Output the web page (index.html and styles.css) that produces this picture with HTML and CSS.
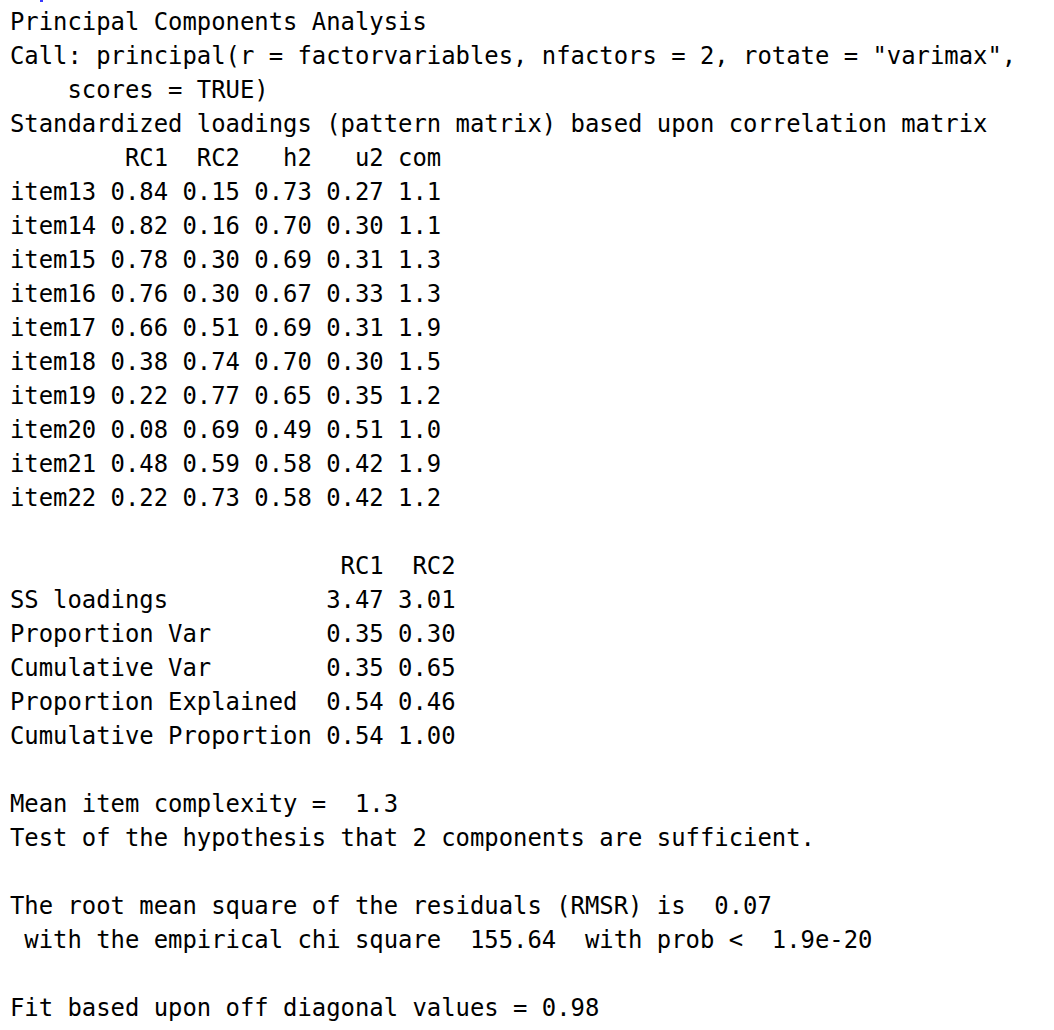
FILE: index.html
```html
<!DOCTYPE html>
<html>
<head>
<meta charset="utf-8">
<link rel="stylesheet" href="styles.css">
</head>
<body>
<div class="console">
<span class="cursor-mark"></span>
<pre class="output">Principal Components Analysis
Call: principal(r = factorvariables, nfactors = 2, rotate = "varimax", 
    scores = TRUE)
Standardized loadings (pattern matrix) based upon correlation matrix
        RC1  RC2   h2   u2 com
item13 0.84 0.15 0.73 0.27 1.1
item14 0.82 0.16 0.70 0.30 1.1
item15 0.78 0.30 0.69 0.31 1.3
item16 0.76 0.30 0.67 0.33 1.3
item17 0.66 0.51 0.69 0.31 1.9
item18 0.38 0.74 0.70 0.30 1.5
item19 0.22 0.77 0.65 0.35 1.2
item20 0.08 0.69 0.49 0.51 1.0
item21 0.48 0.59 0.58 0.42 1.9
item22 0.22 0.73 0.58 0.42 1.2

                       RC1  RC2
SS loadings           3.47 3.01
Proportion Var        0.35 0.30
Cumulative Var        0.35 0.65
Proportion Explained  0.54 0.46
Cumulative Proportion 0.54 1.00

Mean item complexity =  1.3
Test of the hypothesis that 2 components are sufficient.

The root mean square of the residuals (RMSR) is  0.07 
 with the empirical chi square  155.64  with prob <  1.9e-20 

Fit based upon off diagonal values = 0.98</pre>
</div>
</body>
</html>
```
FILE: styles.css
```css
html, body {
  margin: 0;
  padding: 0;
  background: #ffffff;
}
.console {
  position: relative;
  padding: 5px 0 0 10px;
}
.cursor-mark {
  position: absolute;
  left: 40px;
  top: 0;
  width: 3px;
  height: 2px;
  background: #3a3aff;
}
.output {
  margin: 0;
  font-family: "DejaVu Sans Mono", "Liberation Mono", monospace;
  font-size: 23.88px;
  line-height: 34px;
  color: #000000;
  white-space: pre;
}
```
